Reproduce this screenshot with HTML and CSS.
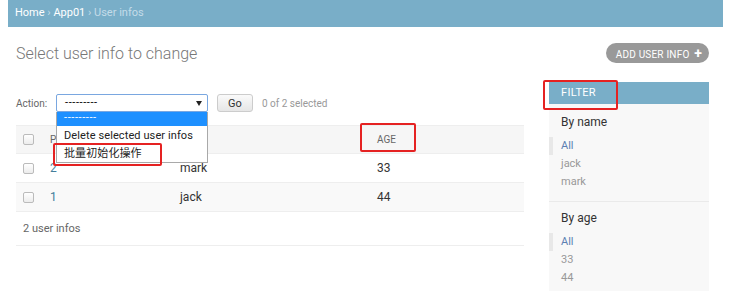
FILE: index.html
```html
<!DOCTYPE html>
<html lang="en">
<head>
    <meta charset="utf-8">
    <title>Select user info to change</title>
    <link rel="stylesheet" href="styles.css">
</head>
<body>
    <div class="breadcrumbs">
        <a href="#">Home</a> › <a href="#">App01</a> › User infos
    </div>

    <div id="content">
        <div class="title-row">
            <h1>Select user info to change</h1>
            <a href="#" class="addlink">ADD USER INFO <span class="plus">+</span></a>
        </div>

        <div class="main">
            <div id="changelist">
                <div class="actions">
                    <label>Action:</label>
                    <div class="select">
                        <span>---------</span>
                        <span class="arrow"></span>
                        <ul class="options">
                            <li class="current">---------</li>
                            <li>Delete selected user infos</li>
                            <li>批量初始化操作</li>
                        </ul>
                    </div>
                    <button class="go">Go</button>
                    <span class="counter">0 of 2 selected</span>
                </div>

                <table id="result_list">
                    <colgroup>
                        <col class="c-check"><col class="c-id"><col class="c-name"><col class="c-age">
                    </colgroup>
                    <thead>
                        <tr>
                            <th><span class="checkbox"></span></th>
                            <th>PK</th>
                            <th></th>
                            <th>AGE</th>
                        </tr>
                    </thead>
                    <tbody>
                        <tr>
                            <td><span class="checkbox"></span></td>
                            <td><a href="#">2</a></td>
                            <td>mark</td>
                            <td>33</td>
                        </tr>
                        <tr>
                            <td><span class="checkbox"></span></td>
                            <td><a href="#">1</a></td>
                            <td>jack</td>
                            <td>44</td>
                        </tr>
                    </tbody>
                </table>
                <p class="paginator">2 user infos</p>
            </div>

            <div id="changelist-filter">
                <h2>FILTER</h2>
                <div class="filter-group">
                    <h3>By name</h3>
                    <ul>
                        <li class="selected"><a href="#">All</a></li>
                        <li><a href="#">jack</a></li>
                        <li><a href="#">mark</a></li>
                    </ul>
                </div>
                <div class="filter-group">
                    <h3>By age</h3>
                    <ul>
                        <li class="selected"><a href="#">All</a></li>
                        <li><a href="#">33</a></li>
                        <li><a href="#">44</a></li>
                    </ul>
                </div>
            </div>
        </div>
    </div>

    <!-- annotation boxes -->
    <div class="mark mark-option"></div>
    <div class="mark mark-age"></div>
    <div class="mark mark-filter"></div>
</body>
</html>
```

FILE: styles.css
```css
html,body{
    margin: 0;
    background-color: white;
}
body{
    position: relative;
    font-family: Roboto, "Noto Sans CJK SC", sans-serif;
    color: #333;
    font-size: 12px;
}
a{
    text-decoration: none;
}
ul{
    list-style: none;
    margin: 0;
    padding: 0;
}

.breadcrumbs{
    margin: 0 6px 0 8px;
    height: 27px;
    line-height: 25px;
    padding: 0 7px;
    background-color: #79aec8;
    color: #c4dce8;
    font-size: 11px;
}
.breadcrumbs a{
    color: white;
}

#content{
    padding: 0 20px 0 16px;
}

.title-row{
    display: flex;
    justify-content: space-between;
    align-items: flex-start;
    padding-top: 16px;
}
.title-row h1{
    margin: 1px 0 0;
    font-size: 16px;
    line-height: 20px;
    font-weight: 300;
    color: #777;
}
.addlink{
    display: block;
    height: 20px;
    line-height: 20px;
    padding: 0 7px 0 10px;
    border-radius: 10px;
    background-color: #999;
    color: white;
    font-size: 10px;
    letter-spacing: 0.2px;
}
.addlink .plus{
    font-size: 14px;
    font-weight: bold;
    margin-left: 2px;
}

.main{
    display: flex;
    gap: 25px;
    margin-top: 18px;
}

#changelist{
    width: 508px;
    padding-top: 12px;
}
.actions{
    display: flex;
    align-items: center;
    height: 18px;
    font-size: 10px;
    color: #666;
}
.actions label{
    width: 40px;
}
.select{
    position: relative;
    box-sizing: border-box;
    width: 152px;
    height: 18px;
    line-height: 16px;
    padding-left: 8px;
    border: 1px solid #7aa7e0;
    border-radius: 2px;
    color: #000;
    font-size: 11px;
    letter-spacing: 0.6px;
}
.select .arrow{
    position: absolute;
    right: 5px;
    top: 6px;
    border-left: 3px solid transparent;
    border-right: 3px solid transparent;
    border-top: 5px solid #222;
}
.options{
    position: absolute;
    top: 17px;
    left: -1px;
    width: 152px;
    box-sizing: border-box;
    border: 1px solid #a9a9a9;
    border-top: none;
    background-color: white;
    color: #222;
    font-size: 11px;
    letter-spacing: 0.1px;
    z-index: 2;
}
.options li{
    height: 18px;
    line-height: 19px;
    padding-left: 7px;
}
.options li.current{
    height: 14px;
    line-height: 12px;
    background-color: #1e90ff;
    color: white;
    letter-spacing: 0.6px;
}
.go{
    box-sizing: border-box;
    width: 36px;
    height: 18px;
    margin-left: 9px;
    padding: 0;
    border: 1px solid #ccc;
    border-radius: 3px;
    background: linear-gradient(#fafafa, #e6e6e6);
    color: #333;
    font: 11px Roboto, sans-serif;
}
.counter{
    margin-left: 9px;
    color: #999;
}

#result_list{
    width: 508px;
    margin-top: 13px;
    border-collapse: collapse;
    table-layout: fixed;
}
.c-check{ width: 26px; }
.c-id{ width: 130px; }
.c-name{ width: 197px; }
.c-age{ width: 155px; }
#result_list th,
#result_list td{
    padding: 0 8px;
    text-align: left;
    vertical-align: middle;
}
#result_list th:first-child,
#result_list td:first-child{
    padding: 0 0 0 7px;
}
#result_list thead th{
    height: 27px;
    background-color: #f6f6f6;
    border-top: 1px solid #eee;
    border-bottom: 1px solid #eee;
    font-size: 10px;
    font-weight: 400;
    color: #666;
}
#result_list tbody td{
    height: 28px;
    border-bottom: 1px solid #eee;
    font-size: 12px;
}
#result_list tbody tr:nth-child(even){
    background-color: #f9f9f9;
}
#result_list td a{
    color: #447e9b;
}
.checkbox{
    display: block;
    box-sizing: border-box;
    width: 11px;
    height: 11px;
    border: 1px solid #bbb;
    border-radius: 2px;
    background: linear-gradient(#fff, #ececec);
}
.paginator{
    margin: 0;
    height: 33px;
    line-height: 33px;
    padding-left: 7px;
    border-bottom: 1px solid #eee;
    font-size: 11px;
    color: #666;
}

#changelist-filter{
    width: 160px;
    height: 210px;
    background-color: #f8f8f8;
}
#changelist-filter h2{
    margin: 0 0 2px;
    height: 22px;
    line-height: 22px;
    padding: 0 12px;
    background-color: #79aec8;
    color: white;
    font-size: 11px;
    font-weight: 400;
    letter-spacing: 0.3px;
}
.filter-group{
    padding-top: 8px;
}
.filter-group:first-of-type{
    border-bottom: 1px solid #eaeaea;
    padding-bottom: 10px;
}
.filter-group h3{
    margin: 0 0 7px;
    padding-left: 12px;
    font-size: 12px;
    line-height: 16px;
    font-weight: 400;
    color: #333;
}
.filter-group li{
    padding: 1px 0 1px 12px;
    line-height: 16px;
    font-size: 11px;
}
.filter-group li a{
    color: #999;
}
.filter-group li.selected{
    border-left: 4px solid #e8e8e8;
    padding-left: 8px;
}
.filter-group li.selected a{
    color: #5b80b2;
}

.mark{
    position: absolute;
    box-sizing: border-box;
    border: 2px solid #e52222;
    border-radius: 2px;
    z-index: 3;
}
.mark-option{
    left: 53px;
    top: 143px;
    width: 109px;
    height: 23px;
}
.mark-age{
    left: 360px;
    top: 123px;
    width: 56px;
    height: 29px;
}
.mark-filter{
    left: 543px;
    top: 80px;
    width: 75px;
    height: 30px;
}
```
